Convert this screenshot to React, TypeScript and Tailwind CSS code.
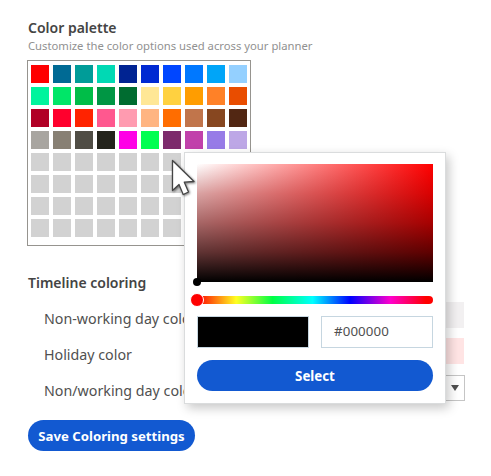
const palette = [
  'bg-[#ff0000]', 'bg-[#006a94]', 'bg-[#009c98]', 'bg-[#00d9b4]', 'bg-[#002392]', 'bg-[#0029d2]', 'bg-[#0046ff]', 'bg-[#0078ff]', 'bg-[#00a5f8]', 'bg-[#94d0ff]',
  'bg-[#00f49d]', 'bg-[#00e668]', 'bg-[#00bd48]', 'bg-[#009644]', 'bg-[#006c30]', 'bg-[#ffe796]', 'bg-[#ffd140]', 'bg-[#ff9d00]', 'bg-[#ff8127]', 'bg-[#e94d00]',
  'bg-[#b10025]', 'bg-[#ff002d]', 'bg-[#ff2300]', 'bg-[#ff588f]', 'bg-[#ff9bb0]', 'bg-[#ffb582]', 'bg-[#ff6d00]', 'bg-[#c1754b]', 'bg-[#874720]', 'bg-[#522713]',
  'bg-[#a8a5a0]', 'bg-[#888074]', 'bg-[#504d45]', 'bg-[#24241c]', 'bg-[#ff00e6]', 'bg-[#00ff51]', 'bg-[#7d2a6c]', 'bg-[#c141ab]', 'bg-[#977be7]', 'bg-[#bda7e6]',
];
const cells = [...palette, ...Array<string>(40).fill('bg-[#d2d2d2]')];

function ColorPicker() {
  return (
    <div className="absolute left-[184px] top-[152px] h-[252px] w-[262px] border border-[#dadcdd] bg-white px-3 pt-[11px] shadow-[3px_4px_10px_rgba(0,0,0,0.22)]">
      <div className="relative h-[118px] bg-[linear-gradient(to_bottom,rgba(170,0,0,0),rgba(149,0,0,0.36)_25%,rgba(107,0,0,0.6)_50%,rgba(54,0,0,0.8)_75%,#000),linear-gradient(to_right,#fff,#f00)]">
        <span className="absolute -left-1 bottom-[-4px] size-2 rounded-full bg-black" />
      </div>
      <div className="relative mt-3.5 h-2 rounded-full bg-[linear-gradient(to_right,#f00,#ff2_16.6%,#00ff44_32%,#0ff_49%,#00f_65%,#f0c_82%,#f00_97%)]">
        <span className="absolute -left-[7px] -top-[3px] size-3.5 rounded-full border border-white bg-[#f00]" />
      </div>
      <div className="mt-3 flex gap-3">
        <div className="h-8 w-28 border border-[#c6d6e0] bg-black" />
        <div className="flex h-8 w-28 items-center border border-[#c6d6e0] pl-3 text-[13.3px] tracking-[0.1px] text-[#505050]">#000000</div>
      </div>
      <button className="mt-3 flex h-[31px] w-full items-center justify-center rounded-full bg-[#1259d1] pt-[3px] text-[13.3px] font-bold text-white">Select</button>
    </div>
  );
}

function Cursor() {
  return (
    <svg className="absolute left-[168px] top-[156px] drop-shadow-[1px_1px_1px_rgba(0,0,0,0.5)]" width="32" height="42" viewBox="0 0 32 42">
      <path d="M4.5 4.5V34.5L11 28.5L15.2 38.5L20.5 36L16.3 26.2L26 25.5Z" fill="white" stroke="#444" strokeWidth="1.3" strokeLinejoin="round" />
    </svg>
  );
}

export default function App() {
  return (
    <main className="relative h-[476px] w-[491px] overflow-hidden bg-white pl-7 font-['Noto_Sans','Open_Sans',sans-serif] text-[#444]">
      <h1 className="pt-[18px] text-sm leading-5 font-semibold whitespace-nowrap">Color palette</h1>
      <p className="text-[11.28px] leading-4 whitespace-nowrap text-[#919191]">Customize the color options used across your planner</p>
      <div className="mt-[6px] -ml-px grid h-[186px] w-[224px] grid-cols-[repeat(10,18px)] content-start gap-1 border border-[#96948f] pt-1 pl-[3px]">
        {cells.map((color, index) => <span key={index} className={`h-[18px] ${color}`} />)}
      </div>
      <h2 className="mt-[27px] text-sm leading-5 font-semibold">Timeline coloring</h2>
      <div className="mt-2 w-[437px] pl-4 text-[14.25px] text-[#505050]">
        <div className="flex h-9 items-center justify-between"><span>Non-working day color</span><span className="mt-[-9px] mr-px h-[26px] w-20 bg-[#f2f0f1]" /></div>
        <div className="flex h-9 items-center justify-between"><span>Holiday color</span><span className="mt-[-9px] mr-px h-[26px] w-20 bg-[#ffe4e4]" /></div>
        <div className="flex h-9 items-center justify-between"><span>Non/working day color</span><span className="mt-[-6px] flex h-[26px] w-20 items-center justify-end border border-[#c5c5c5] pr-[5px]"><svg width="8" height="6"><path d="M0 0H8L4 6Z" fill="#505050" /></svg></span></div>
      </div>
      <button className="mt-[11px] flex h-[31px] w-[167px] items-center justify-center rounded-full bg-[#1259d1] pt-[2px] text-[13.2px] font-bold whitespace-nowrap text-white">Save Coloring settings</button>
      <ColorPicker />
      <Cursor />
    </main>
  );
}
